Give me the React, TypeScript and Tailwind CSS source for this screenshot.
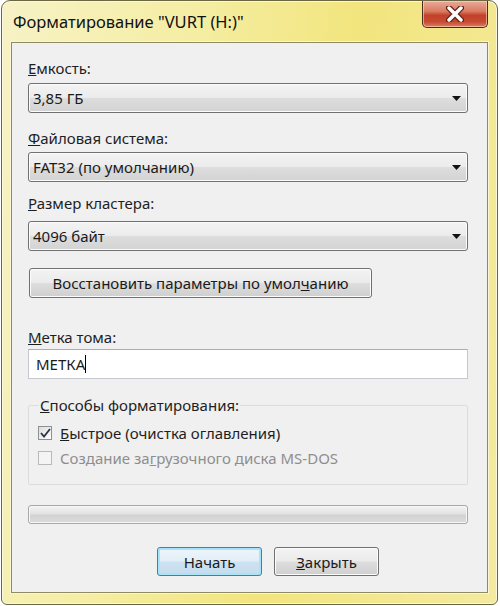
import React from "react";

const font = { fontFamily: '"Noto Sans", "Open Sans", sans-serif' };

function Arrow() {
  return (
    <svg width="9" height="5" viewBox="0 0 9 5" className="shrink-0">
      <path d="M0 0 H9 L4.5 5 Z" fill="#111" />
    </svg>
  );
}

function Select({ value }: { value: string }) {
  return (
    <div className="h-[30px] rounded-[3px] border border-[#707070] bg-[linear-gradient(#f3f3f3_0%,#ececec_48%,#dddddd_52%,#d3d3d3_100%)] shadow-[inset_0_0_0_1px_#fcfcfc] flex items-center pl-[4px] pr-[6px]">
      <span className="flex-1 text-[15px] leading-[22px] text-[#1a1a1a]">{value}</span>
      <Arrow />
    </div>
  );
}

function Label({ children, className = "" }: { children: React.ReactNode; className?: string }) {
  return <div className={"text-[15px] leading-[22px] text-[#1e1e1e] " + className}>{children}</div>;
}

export default function App() {
  return (
    <div className="w-[500px] h-[606px] bg-white" style={font}>
      <div className="ml-px w-[497px] h-[605px] rounded-t-[9px] rounded-b-[6px] border border-[#6b6743] bg-[linear-gradient(100deg,#f7f2c6_0%,#f5eea6_30%,#f2e57e_60%,#f4eaa0_100%)] shadow-[inset_0_0_0_1px_#fbf8dc] flex flex-col px-[9px] pb-[11px]">
        <div className="h-[41px] flex items-start justify-between">
          <div className="pl-[2px] pt-[9px] text-[16.5px] leading-[24px] text-[#111]">Форматирование "VURT (H:)"</div>
          <div className="w-[66px] h-[27px] rounded-b-[5px] border border-t-0 border-[#4a2b1c] bg-[linear-gradient(#e9aa98_0%,#d97a62_40%,#c2412a_55%,#c64a31_80%,#dd7e62_100%)] shadow-[inset_0_0_0_1px_rgba(255,220,200,0.6)] flex items-center justify-center">
            <svg width="18" height="16" viewBox="0 0 18 16">
              <path d="M3 2 L15 14 M15 2 L3 14" stroke="#5a2418" strokeWidth="6" strokeLinecap="round" />
              <path d="M3 2 L15 14 M15 2 L3 14" stroke="#ffffff" strokeWidth="3.5" strokeLinecap="round" />
            </svg>
          </div>
        </div>
        <div className="flex-1 border border-[#8d8a64] bg-[#f0f0f0] shadow-[0_0_0_1px_#fbf6cf] flex flex-col pl-[16px] pr-[19px] pt-[14px]">
          <Label>
            <u>Е</u>мкость:
          </Label>
          <div className="mt-[4px]">
            <Select value="3,85 ГБ" />
          </div>
          <Label className="mt-[14px]">
            <u>Ф</u>айловая система:
          </Label>
          <div className="mt-[3px]">
            <Select value="FAT32 (по умолчанию)" />
          </div>
          <Label className="mt-[10px]">
            <u>Р</u>азмер кластера:
          </Label>
          <div className="mt-[7px]">
            <Select value="4096 байт" />
          </div>
          <div className="mt-[17px] ml-[1px] w-[343px] h-[30px] rounded-[3px] border border-[#707070] bg-[linear-gradient(#f3f3f3_0%,#ebebeb_48%,#dddddd_52%,#cfcfcf_100%)] shadow-[inset_0_0_0_1px_#fcfcfc] flex items-center justify-center text-[15px] leading-[22px] text-[#1a1a1a]">
            Восстановить параметры по умол<u>ч</u>анию
          </div>
          <Label className="mt-[28px]">
            <u>М</u>етка тома:
          </Label>
          <div className="mt-[1px] h-[30px] border border-[#c5c9cf] border-t-[#abadb3] bg-white flex items-center pl-[7px] text-[15px] leading-[22px] text-[#1a1a1a]">
            МЕТКА<span className="inline-block w-px h-[18px] bg-black" />
          </div>
          <fieldset className="mt-[15px] h-[91px] border border-[#dcdcdc] rounded-[2px] pl-[9px] pr-2 pt-[4px]">
            <legend className="ml-[1px] px-[1px] text-[15px] leading-[22px] text-[#1e1e1e]">
              <u>С</u>пособы форматирования:
            </legend>
            <div className="flex items-center gap-[8px] h-[22px] mt-[2px]">
              <div className="w-[14px] h-[14px] border border-[#8e8f8f] bg-[linear-gradient(135deg,#dcdcdc,#ffffff)] flex items-center justify-center">
                <svg width="11" height="10" viewBox="0 0 11 10">
                  <path d="M1 5 L4 8.5 L10 1" stroke="#2c3440" strokeWidth="1.8" fill="none" />
                </svg>
              </div>
              <span className="text-[15px] leading-[22px] text-[#1e1e1e]">
                <u>Б</u>ыстрое (очистка оглавления)
              </span>
            </div>
            <div className="flex items-center gap-[8px] h-[22px] mt-[3px]">
              <div className="w-[14px] h-[14px] border border-[#b9b9b9] bg-[#f4f4f4]" />
              <span className="text-[15px] leading-[22px] text-[#8e8e8e]">
                Создание за<u>г</u>рузочного диска MS-DOS
              </span>
            </div>
          </fieldset>
          <div className="mt-[20px] h-[19px] rounded-[3px] border border-[#a9a9a9] bg-[linear-gradient(#f4f4f4_0%,#e2e2e2_45%,#d2d2d2_55%,#dcdcdc_100%)] shadow-[inset_0_0_0_1px_#f7f7f7]" />
          <div className="mt-[23px] flex justify-end gap-[12px] pr-[89px]">
            <div className="w-[105px] h-[29px] rounded-[3px] border border-[#3c7fb1] bg-[linear-gradient(#eef6fb_0%,#e2eef7_48%,#cde2f1_52%,#c5dcee_100%)] shadow-[inset_0_0_0_2px_#a6e4fa] flex items-center justify-center text-[15px] leading-[22px] text-[#1a1a1a]">
              Начать
            </div>
            <div className="w-[105px] h-[29px] rounded-[3px] border border-[#707070] bg-[linear-gradient(#f3f3f3_0%,#ebebeb_48%,#dddddd_52%,#cfcfcf_100%)] shadow-[inset_0_0_0_1px_#fcfcfc] flex items-center justify-center text-[15px] leading-[22px] text-[#1a1a1a]">
              <u>З</u>акрыть
            </div>
          </div>
        </div>
      </div>
    </div>
  );
}
